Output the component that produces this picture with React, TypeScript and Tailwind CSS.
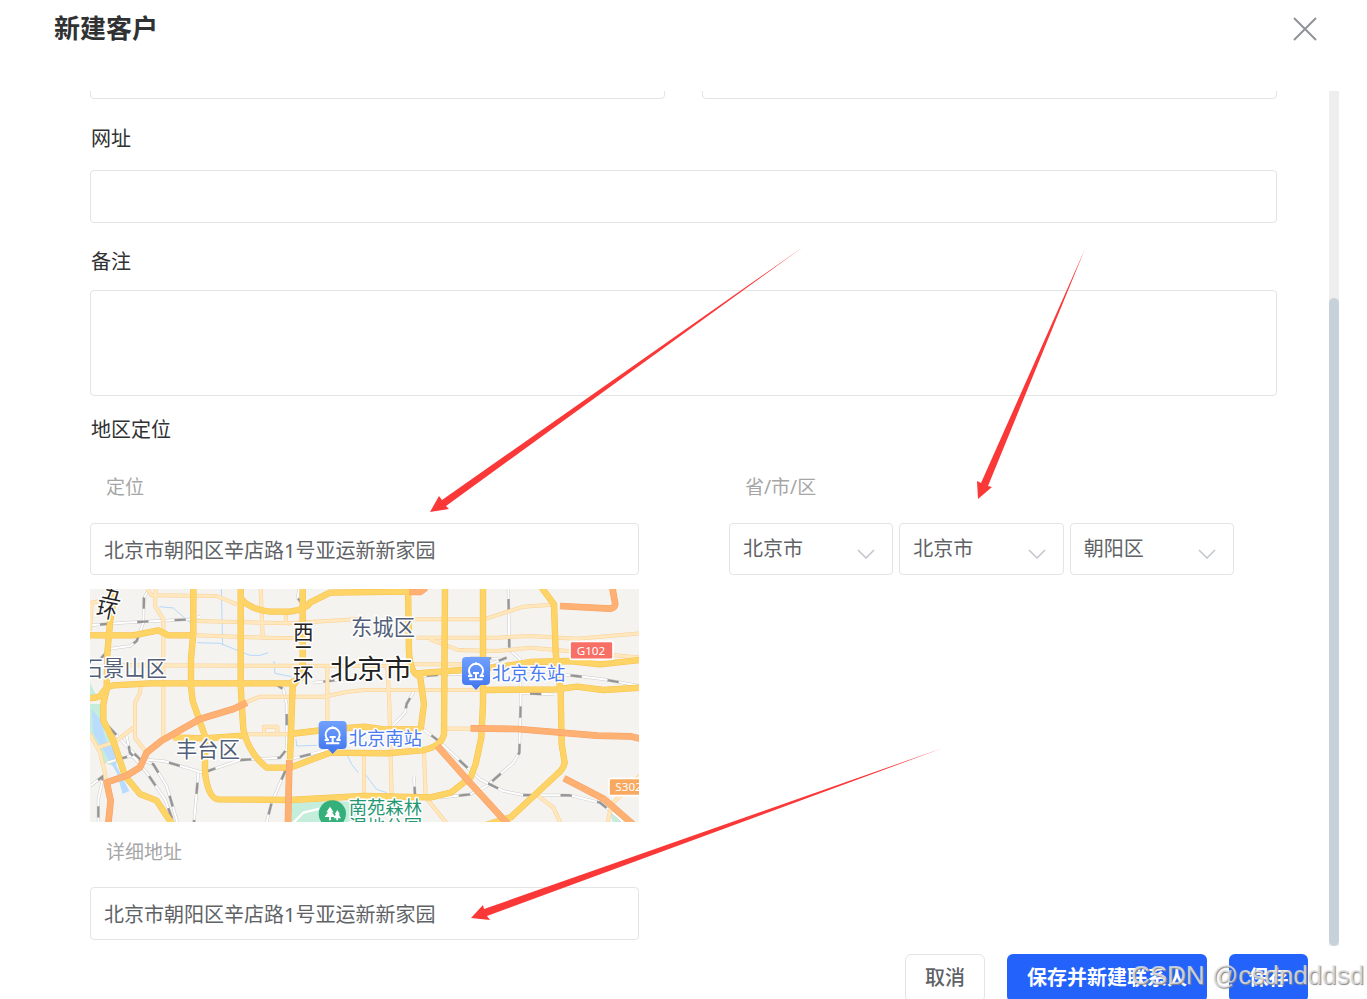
import type { ReactNode } from "react"
import { clsx } from "clsx"

const fieldClass =
  "block w-full rounded border border-[#e4e4e4] bg-white px-[13px] text-xl text-[#606266] outline-none"

const regions = [
  { id: "province", label: "省", value: "北京市" },
  { id: "city", label: "市", value: "北京市" },
  { id: "district", label: "区", value: "朝阳区" },
]

// Map geometry, drawn in a 1650 x 699 space
const rails = [
  "M0 118 L100 110 L300 100 L330 92",
  "M178 9 L162 35 L160 110 L140 165 L120 180 L60 188 L30 220",
  "M35 400 L110 480 L150 520 L220 525 L340 560 L450 522 L570 515 L590 490 L590 354 L580 310 L560 296",
  "M50 530 L120 510 L190 535 L230 600 L262 708",
  "M110 450 L120 500 L170 560 L225 640 L250 708",
  "M325 560 L318 640 L312 708",
  "M600 522 L575 580 L545 650 L530 708",
  "M600 520 L720 490",
  "M0 600 L40 570 L25 640 L25 708",
  "M628 9 L622 35 L635 50",
  "M670 290 L760 280",
  "M980 272 L1060 265 L1120 265 L1250 215",
  "M1255 9 L1258 190 L1290 220 L1292 354 L1288 500 L1270 530 L1190 600 L1140 625 L1050 635",
  "M1140 215 L1225 218",
  "M1300 255 L1440 268 L1540 280 L1650 300",
  "M975 310 L950 354 L945 380 L910 417",
  "M1000 430 L1040 460 L1170 580 L1240 615 L1300 627 L1440 628 L1530 650 L1580 690 L1600 708",
  "M1290 322 L1390 325",
  "M972 572 L975 628",
]

const lightRoads = [
  "M172 9 L185 28 L380 30 L440 55",
  "M197 9 L195 60 L220 100 L220 460",
  "M0 135 L5 50 L30 45",
  "M320 105 L600 112 L822 98",
  "M320 148 L520 155 L625 157",
  "M512 9 L518 150",
  "M588 80 L588 108",
  "M60 238 L960 240",
  "M712 240 L712 435",
  "M460 352 L510 332 L700 332 L770 318 L822 312 L1180 312",
  "M152 300 L150 320 L135 350 L135 455 L170 500",
  "M0 444 L30 500 L45 560 L48 600",
  "M25 484 L75 468 L130 425",
  "M470 445 L600 445",
  "M522 445 L522 422 L562 422 L562 445",
  "M954 100 L1182 100 L1300 62 L1385 56",
  "M980 155 L1220 155 L1320 150 L1460 158 L1650 142",
  "M1020 160 L1105 192 L1220 195 L1322 185 L1440 196 L1650 215",
  "M962 235 L1130 235",
  "M892 240 L898 354 L905 628",
  "M822 500 L822 628",
  "M1002 498 L1007 634 L1070 712",
  "M1070 428 L1150 428",
  "M1345 630 L1390 665 L1412 712",
  "M1650 568 L1600 620 L1565 655 L1552 712",
]

const mainRoads = [
  "M75 9 L60 110 L52 200 L50 310 L40 354 L40 404 L70 464 L90 524 L105 569 L150 624 L200 644 L245 712",
  "M0 148 L130 148 L205 133 L235 148 L318 148",
  "M310 5 L310 140 L303 220 L303 300 L308 345 L345 450 L345 560 Q355 638 385 640 L600 642 L822 630 L1022 634 L1082 620 L1142 574 L1157 534 L1174 454 L1179 354 L1179 5",
  "M0 336 Q20 336 30 330 Q50 300 70 298 L180 292 L600 292 L638 272",
  "M452 5 L452 300 L460 430 Q475 500 530 545 L600 545 L720 500 L892 502 L1002 492 Q1055 480 1062 444 L1065 5",
  "M455 40 Q480 70 540 77 L600 77 Q650 70 660 50 L720 20 L950 17",
  "M954 9 L957 200 Q962 265 990 270 L1002 354 L992 430",
  "M600 444 L700 432 L822 422 L882 430 L992 430",
  "M638 5 L638 260 L608 300 L600 520",
  "M250 454 L340 457 L460 449",
  "M1355 5 L1392 55 L1397 200 L1412 320 L1415 474 L1424 530 Q1420 550 1402 564 L1262 694 L1190 716",
  "M980 262 L1120 252 L1230 243 L1320 228 L1440 225 L1530 235 L1650 222",
  "M1180 312 L1400 310 L1460 302 L1540 312 L1650 305",
]

const expressways = [
  "M470 350 L430 369 L330 399 L215 464 L170 500 L150 544 L110 569 L50 589 L62 644 L55 712",
  "M958 18 L990 18 L1008 5",
  "M1410 60 L1560 68 Q1580 65 1574 45 L1567 5",
  "M1142 427 L1282 429 L1522 449 L1620 451 L1650 458",
  "M1042 480 L1140 590 L1255 716",
  "M1422 577 L1542 639 L1630 716",
  "M598 522 L594 712",
]

const water = [
  "M208 62 L250 66 L300 110",
  "M394 9 L398 178",
  "M322 170 L390 172 L480 208 L510 208 L535 200",
  "M552 225 L555 262 L605 272",
  "M618 460 L620 480 L680 478",
  "M770 505 L785 535 L805 560",
  "M822 560 L860 610 L890 620",
]

function Strokes({ paths, color, width }: { paths: string[]; color: string; width: number }) {
  return (
    <g fill="none" stroke={color} strokeWidth={width} strokeLinejoin="round">
      {paths.map((d) => (
        <path key={d} d={d} />
      ))}
    </g>
  )
}

function Station({ x, y }: { x: number; y: number }) {
  return (
    <g transform={`translate(${x} ${y})`}>
      <path d="M12 0 H72 Q84 0 84 12 V72 Q84 84 72 84 H56 L42 99 L28 84 H12 Q0 84 0 72 V12 Q0 0 12 0Z" fill="url(#pin)" />
      <path
        d="M28 57 A21 21 0 1 1 56 57 M18 57 H31 M53 57 H66 M33 48 H51 M42 48 V67 M22 67 H62"
        fill="none"
        stroke="#fff"
        strokeWidth="6"
      />
      <path d="M35 23 L42 14 L49 23Z" fill="#fff" />
    </g>
  )
}

function CityMap() {
  return (
    <svg viewBox="0 9 1647 699" role="img" aria-label="北京市地图" className="mt-[14px] block w-full">
      <defs>
        <linearGradient id="pin" x1="0" y1="0" x2="0" y2="1">
          <stop offset="0" stopColor="#71a0ff" />
          <stop offset="1" stopColor="#3f75ed" />
        </linearGradient>
      </defs>
      <rect y="9" width="1647" height="699" fill="#f4f3f0" />
      <path d="M0 290 L20 330 L0 345Z M0 354 H30 L45 440 L80 480 L70 540 L40 530 L0 450Z" fill="#c5eddb" />
      <path d="M600 652 L740 645 L822 650 L830 708 H600Z M1560 680 L1600 712 H1570Z" fill="#c5eddb" />
      <path d="M5 370 L30 400 L50 470 L75 490 L80 540 L105 590 L118 615 L98 624 L80 560 L50 510 L10 440Z" fill="#b9dcff" />
      <Strokes paths={water} color="#b5d9fb" width={3} />
      <Strokes paths={rails} color="#cbcbcb" width={9} />
      <Strokes paths={rails} color="#ffffff" width={6} />
      <g fill="none" stroke="#959595" strokeWidth="7" strokeDasharray="34 78" strokeDashoffset="-30">
        {rails.map((d) => (
          <path key={d} d={d} />
        ))}
      </g>
      <Strokes paths={lightRoads} color="#fbcf95" width={12} />
      <Strokes paths={lightRoads} color="#ffe8bd" width={9} />
      <Strokes paths={mainRoads} color="#f5c04c" width={19} />
      <Strokes paths={mainRoads} color="#ffd466" width={16} />
      <Strokes paths={expressways} color="#f79f62" width={20} />
      <Strokes paths={expressways} color="#ffb173" width={17} />
      <path d="M608 712 L640 680 L690 668" fill="none" stroke="#fff" strokeWidth="7" />

      <rect x="1440" y="166" width="129" height="54" rx="6" fill="#f76f65" stroke="#fff" strokeWidth="5" />
      <rect x="1557" y="577" width="110" height="52" rx="6" fill="#f9a85f" stroke="#fff" strokeWidth="5" />
      <Station x={1116} y={213} />
      <Station x={686} y={405} />
      <circle cx="727" cy="684" r="41" fill="#35b07b" />
      <path
        d="M720 662 L731 679 H726 L736 693 H723 V703 H717 V693 H704 L714 679 H709Z M742 672 L750 685 H746 L753 697 H744 V703 H739 V697 H731 L738 685 H734Z"
        fill="#fff"
      />

      <g stroke="#fff" strokeWidth="9" strokeLinejoin="round" paintOrder="stroke">
        <g fill="#535f78" fontSize="64">
          <text x="-25" y="269">石景山区</text>
          <text x="783" y="146">东城区</text>
          <text x="258" y="513">丰台区</text>
        </g>
        <text x="720" y="279" fontSize="82" fill="#222">北京市</text>
        <g fill="#222" fontSize="62">
          <text x="609" y="162">西</text>
          <text x="609" y="224">二</text>
          <text x="609" y="292">环</text>
          <text transform="translate(33 34) rotate(12)">五</text>
          <text transform="translate(16 88) rotate(12)">环</text>
        </g>
        <g fill="#4a7bf0" fontSize="55">
          <text x="1206" y="282">北京东站</text>
          <text x="776" y="477">北京南站</text>
        </g>
        <g fill="#259873" fontSize="55">
          <text x="776" y="683">南苑森林</text>
          <text x="776" y="741">湿地公园</text>
        </g>
      </g>
      <g fill="#fff" fontSize="35">
        <text x="1460" y="206">G102</text>
        <text x="1576" y="616">S302</text>
      </g>
    </svg>
  )
}

function SubLabel({ htmlFor, children }: { htmlFor?: string; children: ReactNode }) {
  return (
    <label htmlFor={htmlFor} className="block pl-4 text-[19px] leading-[26px] text-[#a6a6a6]">
      {children}
    </label>
  )
}

function RegionSelect({ id, label, value }: { id: string; label: string; value: string }) {
  return (
    <div className="relative flex-1">
      <select
        id={id}
        aria-label={label}
        defaultValue={value}
        className={clsx(fieldClass, "h-[52px] appearance-none")}
      >
        <option>{value}</option>
      </select>
      <svg
        viewBox="0 0 18 10"
        className="pointer-events-none absolute right-[18px] top-[26px] h-[10px] w-[18px]"
        fill="none"
        stroke="#c0c4cc"
        strokeWidth="1.5"
      >
        <path d="M1 1 L9 9 L17 1" />
      </svg>
    </div>
  )
}

function Arrows() {
  return (
    <svg viewBox="0 0 1367 999" className="pointer-events-none absolute left-0 top-0 h-[999px] w-[1367px]" fill="#fb3838">
      <path d="M803 247 L446 506 L449 509 L430 512 L439 496 L442 500Z" />
      <path d="M1085 249 L988 486 L992 487 L978 499 L977 481 L981 483Z" />
      <path d="M943 748 L487 916 L490 920 L471 918 L483 905 L484 909Z" />
    </svg>
  )
}

export default function App() {
  return (
    <div className="relative flex h-screen flex-col overflow-hidden bg-white font-['Noto_Sans','Noto_Sans_CJK_SC',sans-serif]">
      <header className="flex h-[91px] shrink-0 items-start justify-between pl-[54px] pr-[50px] pt-[10px]">
        <h1 className="text-[26px] font-bold leading-9 text-[#303133]">新建客户</h1>
        <button type="button" aria-label="关闭" className="mt-[7px] text-[#909399]">
          <svg viewBox="0 0 24 24" className="size-6" fill="none" stroke="currentColor" strokeWidth="2">
            <path d="M1 1 L23 23 M23 1 L1 23" />
          </svg>
        </button>
      </header>

      <main className="flex min-h-0 flex-1 pr-7">
        <form className="min-w-0 flex-1 overflow-hidden pl-[90px] pr-[52px] text-[#303133]">
          <div className="-mt-[45px] grid grid-cols-2 gap-[37px]">
            <input aria-label="电话" className={clsx(fieldClass, "h-[53px]")} />
            <input aria-label="邮箱" className={clsx(fieldClass, "h-[53px]")} />
          </div>

          <label htmlFor="website" className="mb-[17px] mt-[26px] block pl-px text-xl leading-7">
            网址
          </label>
          <input id="website" className={clsx(fieldClass, "h-[53px]")} />

          <label htmlFor="remark" className="mb-[14px] mt-[25px] block pl-px text-xl leading-7">
            备注
          </label>
          <textarea id="remark" className={clsx(fieldClass, "h-[106px] resize-none")} />

          <h2 className="mb-[30px] mt-5 pl-px text-xl leading-7">地区定位</h2>

          <div className="grid grid-cols-[549fr_505fr] gap-[90px] pr-[43px]">
            <div>
              <SubLabel htmlFor="location">定位</SubLabel>
              <input
                id="location"
                defaultValue="北京市朝阳区辛店路1号亚运新新家园"
                className={clsx(fieldClass, "mt-[23px] h-[52px]")}
              />
              <CityMap />
              <div className="mt-[17px]">
                <SubLabel htmlFor="address">详细地址</SubLabel>
              </div>
              <input
                id="address"
                defaultValue="北京市朝阳区辛店路1号亚运新新家园"
                className={clsx(fieldClass, "mt-[22px] h-[53px]")}
              />
            </div>
            <div>
              <SubLabel htmlFor="province">省/市/区</SubLabel>
              <div className="mt-[23px] flex gap-[6px]">
                {regions.map((region) => (
                  <RegionSelect key={region.id} {...region} />
                ))}
              </div>
            </div>
          </div>
        </form>

        <div className="flex w-[10px] flex-col bg-[#eeeeee]">
          <div className="mt-[207px] flex-1 rounded-full bg-[#c6d1da]" />
        </div>
      </main>

      <footer className="flex h-[53px] shrink-0 items-start justify-end gap-[22px] pr-[59px] pt-2 text-xl">
        <button type="button" className="h-12 shrink-0 rounded-md border border-[#e4e4e4] px-[19px] font-medium text-[#606266]">
          取消
        </button>
        <button type="button" className="h-12 shrink-0 rounded-md bg-[#2362fb] px-5 font-bold text-white">
          保存并新建联系人
        </button>
        <button type="button" className="h-12 w-[79px] shrink-0 rounded-md bg-[#2362fb] font-bold text-white">
          保存
        </button>
      </footer>

      <Arrows />
      <span className="pointer-events-none absolute bottom-1 right-[3px] font-['Liberation_Sans',sans-serif] text-[26px] leading-10 text-[#e4e4e4]/80 [text-shadow:1px_1px_1px_#888888]">
        CSDN @csdndddsd
      </span>
    </div>
  )
}
